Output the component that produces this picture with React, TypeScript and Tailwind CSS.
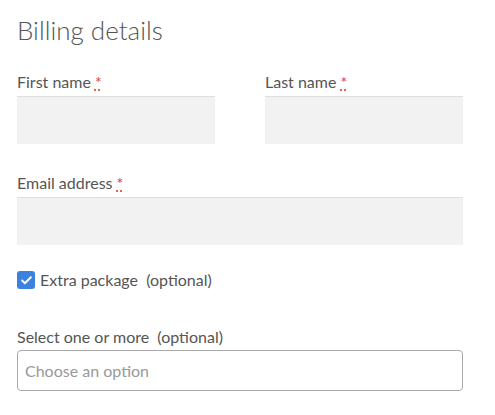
import { Check } from "lucide-react";

function Required() {
  return (
    <abbr
      title="required"
      className="ml-1 text-[#e2401c] no-underline [text-decoration:underline_dotted] [text-underline-offset:2px]"
    >
      *
    </abbr>
  );
}

function Field({ label, className = "" }: { label: string; className?: string }) {
  return (
    <div className={"flex flex-col " + className}>
      <label className="h-[22px] leading-[22px] text-[16px] text-[#555]">
        {label}
        <Required />
      </label>
      <div className="mt-[3px] h-[48px] bg-[#f2f2f2] shadow-[inset_0_1px_1px_rgba(0,0,0,0.08)]" />
    </div>
  );
}

export default function App() {
  return (
    <div className="min-h-[415px] w-[495px] bg-white px-[17px] pt-[12px] font-['Lato',sans-serif]">
      <div className="w-[446px]">
        <h2 className="h-[36px] leading-[36px] text-[26px] font-light text-[#555]">Billing details</h2>

        <div className="mt-[23px] grid grid-cols-2 gap-x-[50px]">
          <Field label="First name" />
          <Field label="Last name" />
        </div>

        <Field label="Email address" className="mt-[28px]" />

        <div className="mt-[24px] flex items-center gap-[5px]">
          <span className="flex h-[18px] w-[18px] items-center justify-center rounded-[3px] bg-[#3b82e0]">
            <Check size={13} strokeWidth={3.5} className="text-white" />
          </span>
          <span className="text-[16px] leading-[22px] text-[#555]">
            Extra package&nbsp; (optional)
          </span>
        </div>

        <label className="mt-[35px] block h-[22px] leading-[22px] text-[16px] text-[#555]">
          Select one or more&nbsp; (optional)
        </label>
        <div className="mt-[2px] flex h-[41px] items-center rounded-[4px] border border-[#aaa] px-[7px] text-[16px] text-[#999]">
          Choose an option
        </div>
      </div>
    </div>
  );
}
